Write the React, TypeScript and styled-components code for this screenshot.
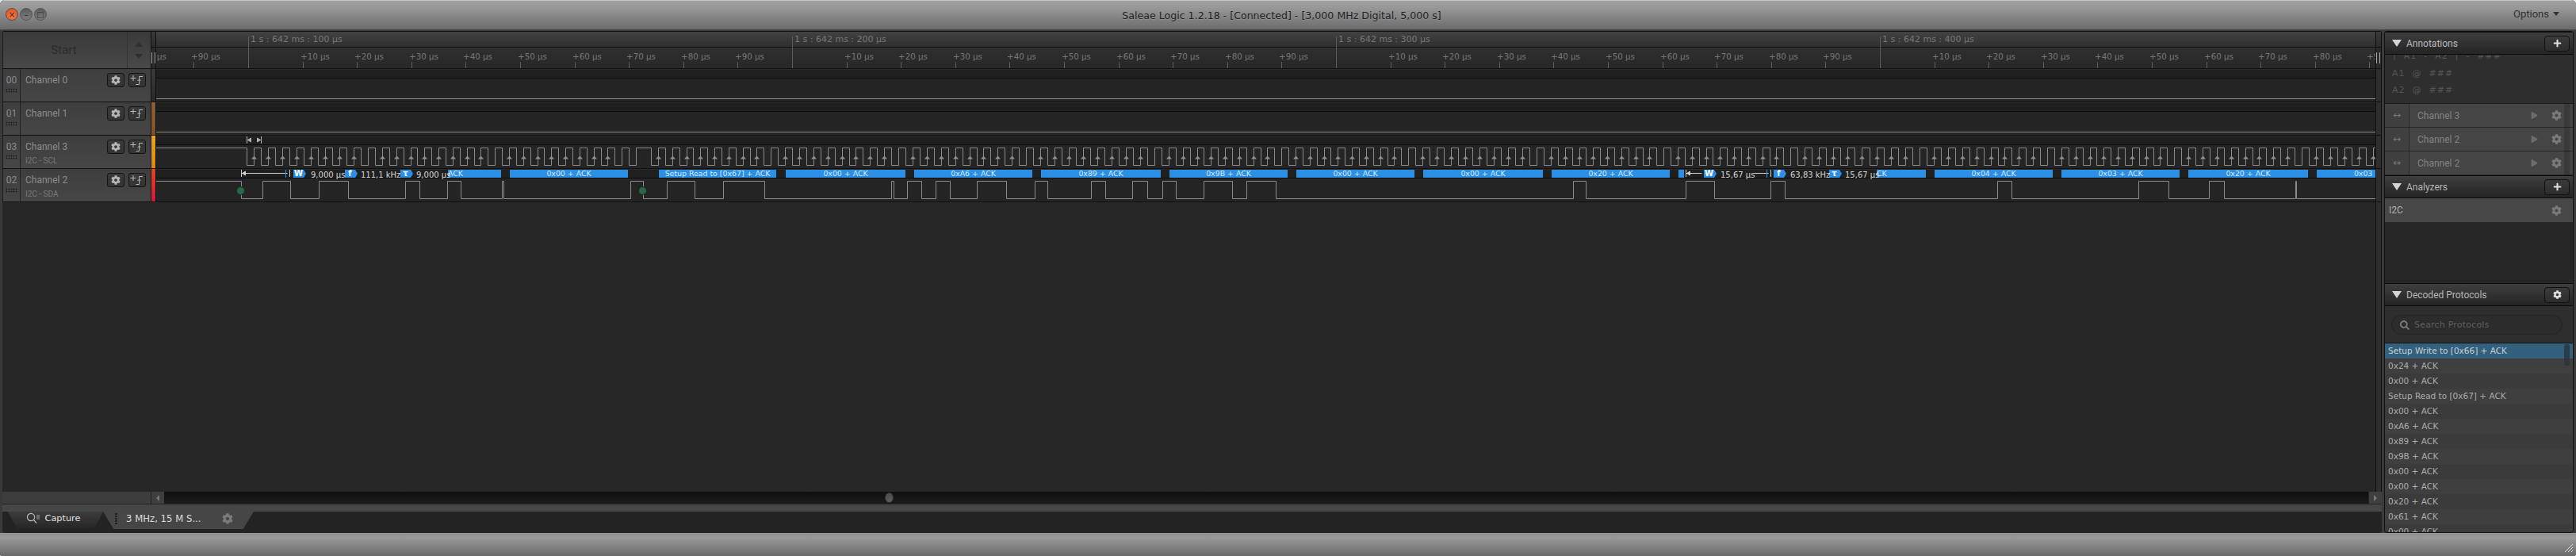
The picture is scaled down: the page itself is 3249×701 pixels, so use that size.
import styled, { createGlobalStyle } from "styled-components";
import { FaCog, FaPlus, FaPlay, FaSearch } from "react-icons/fa";

const GlobalStyle = createGlobalStyle`
    html, body {
        margin: 0;
        padding: 0;
        background: #e8e8e8;
        overflow: hidden;
    }
    * { box-sizing: border-box; }
`;

const SANS = `"DejaVu Sans", sans-serif`;
const ROBOTO = `Roboto, "Liberation Sans", sans-serif`;

const Window = styled.div`
    width: 3249px;
    height: 701px;
    display: flex;
    flex-direction: column;
    border-radius: 6px 6px 3px 3px;
    overflow: hidden;
    background: #3c3c3c;
    font-family: ${SANS};
`;

const TitleBar = styled.header`
    height: 38px;
    flex: none;
    position: relative;
    display: flex;
    align-items: center;
    justify-content: center;
    background: linear-gradient(#a2a2a2, #9a9a9a 20%, #6c6c6c);
    border-top: 1px solid #c8c8c8;
    border-bottom: 1px solid #4a4a4a;
`;

const Lights = styled.div`
    position: absolute;
    left: 7px;
    top: 9px;
    display: flex;
    gap: 2px;
`;

const Light = styled.span<{ $red?: boolean }>`
    width: 16px;
    height: 16px;
    border-radius: 50%;
    display: flex;
    align-items: center;
    justify-content: center;
    font: 10px ${SANS};
    color: #2f2f2f;
    border: 1px solid #555;
    background: ${(p) =>
        p.$red ? "radial-gradient(circle at 50% 70%, #f77a3c, #dc4c22)" : "linear-gradient(#5c5c5c, #7d7d7d)"};
`;

const Title = styled.div`
    font-size: 12.6px;
    color: #1f1f1f;
    text-shadow: 0 1px 0 rgba(255, 255, 255, 0.15);
    margin-left: -16px;
`;

const Options = styled.div`
    position: absolute;
    right: 21px;
    top: 9px;
    display: flex;
    align-items: center;
    gap: 5px;
    font: 13px ${ROBOTO};
    color: #303030;
`;

const DownCaret = styled.span`
    width: 0;
    height: 0;
    border-left: 4px solid transparent;
    border-right: 4px solid transparent;
    border-top: 5px solid #333;
`;

const Body = styled.div`
    flex: 1;
    min-height: 0;
    display: flex;
    gap: 3px;
    padding: 1px 3px 0 3px;
    background: #3a3a3a;
`;

const MainColumn = styled.main`
    width: 3001px;
    flex: none;
    display: flex;
    flex-direction: column;
    background: #272727;
    border-radius: 3px 3px 4px 4px;
    overflow: hidden;
`;

const HeaderRow = styled.div`
    height: 48px;
    flex: none;
    display: flex;
    border-top: 1px solid #111;
    border-bottom: 1px solid #111;
`;

const StartBlock = styled.div`
    width: 187px;
    flex: none;
    display: flex;
    background: linear-gradient(#3a3a3a, #484848);
    border-left: 1px solid #1c1c1c;
`;

const StartLabel = styled.div`
    flex: 1;
    display: flex;
    align-items: center;
    justify-content: center;
    font: 15px ${ROBOTO};
    color: #2c2c2c;
    padding-right: 3px;
`;

const StepCell = styled.div`
    width: 30px;
    display: flex;
    flex-direction: column;
    align-items: center;
    justify-content: center;
    gap: 9px;
    border-left: 1px solid #333;
    padding-right: 2px;
`;

const StepArrow = styled.span<{ $down?: boolean }>`
    width: 0;
    height: 0;
    border-left: 5px solid transparent;
    border-right: 5px solid transparent;
    ${(p) => (p.$down ? "border-top: 6px solid #2f2f2f;" : "border-bottom: 6px solid #2f2f2f;")}
`;

const HandleCell = styled.div`
    width: 7px;
    flex: none;
    display: flex;
    flex-direction: column;
    background: #2b2b2b;
    border-left: 1px solid #0e0e0e;
    border-right: 1px solid #0e0e0e;
`;

const HandleEnd = styled(HandleCell)`
    width: 8px;
`;

const HandleTop = styled.div`
    height: 20px;
    background: linear-gradient(#3a3a3a, #2b2b2b);
    border-bottom: 1px solid #0e0e0e;
`;

const Grip = styled.div`
    width: 5px;
    height: 14px;
    margin-top: 6px;
    border-left: 1px solid #aaa;
    border-right: 1px solid #aaa;
`;

const Ruler = styled.div`
    flex: 1;
    min-width: 0;
    position: relative;
    display: flex;
    flex-direction: column;
    overflow: hidden;
`;

const RulerTop = styled.div`
    height: 20px;
    flex: none;
    background: linear-gradient(#424242, #2f2f2f);
    border-bottom: 1px solid #0e0e0e;
`;

const RulerBottom = styled.div`
    flex: 1;
    background: linear-gradient(#2f2f2f, #272727);
`;

const RulerText = styled.span<{ $major?: boolean }>`
    position: absolute;
    top: ${(p) => (p.$major ? "3px" : "24px")};
    font-size: ${(p) => (p.$major ? "11px" : "10.3px")};
    line-height: 14px;
    white-space: nowrap;
    color: #777;
`;

const RulerTick = styled.span<{ $major?: boolean }>`
    position: absolute;
    bottom: 0;
    width: 1px;
    height: ${(p) => (p.$major ? "40px" : "8px")};
    background: #5c5c5c;
`;

const EndStrip = styled.div`
    width: 8px;
    flex: none;
    background: #2e2e2e;
    border-left: 1px solid #0e0e0e;
    border-right: 1px solid #0e0e0e;
`;

const ChannelRow = styled.div`
    height: 42px;
    flex: none;
    display: flex;
    border-bottom: 1px solid #111;
`;

const ChannelLabel = styled.div`
    width: 187px;
    flex: none;
    display: flex;
    background: linear-gradient(#3e3e3e, #464646);
    border-left: 1px solid #1c1c1c;
`;

const NumberCell = styled.div`
    width: 22px;
    flex: none;
    display: flex;
    flex-direction: column;
    align-items: center;
    padding-top: 7px;
    gap: 3px;
    border-right: 1px solid #222;
    font: 12px/14px ${ROBOTO};
    color: #8a8a8a;
`;

const DotGrid = styled.span`
    width: 15px;
    height: 6px;
    background: radial-gradient(circle, #151515 40%, transparent 50%) 0 0 / 3px 3px;
`;

const NameCell = styled.div`
    flex: 1;
    padding: 7px 0 0 6px;
    display: flex;
    flex-direction: column;
    gap: 5px;
`;

const ChannelName = styled.div`
    font: 12px/14px ${ROBOTO};
    color: #8c8c8c;
`;

const ChannelSub = styled.div`
    font: 10px/12px ${ROBOTO};
    color: #777;
`;

const RowButtons = styled.div`
    display: flex;
    gap: 5px;
    padding: 5px 6px 0 0;
`;

const RowButton = styled.button`
    width: 22px;
    height: 18px;
    padding: 0;
    display: flex;
    align-items: center;
    justify-content: center;
    border: 1px solid #151515;
    border-radius: 3px;
    background: linear-gradient(#3a3a3a, #333);
    color: #b4b4b4;
    font-size: 12px;
`;

const ColorStrip = styled.div<{ $top: string; $bottom: string }>`
    width: 7px;
    flex: none;
    background: linear-gradient(${(p) => p.$top}, ${(p) => p.$bottom});
    border-left: 1px solid #0e0e0e;
    border-right: 1px solid #0e0e0e;
`;

const Trace = styled.div`
    flex: 1;
    min-width: 0;
    position: relative;
    display: flex;
    flex-direction: column;
    overflow: hidden;
    background: #242424;
`;

const Lane = styled.div`
    height: 12px;
    flex: none;
    position: relative;
    background: #1f1f1f;
    border-top: 1px solid #2a2a2a;
    border-bottom: 1px solid #0c0c0c;
`;

const Wave = styled.svg`
    display: block;
    flex: 1;
    width: 100%;
    min-height: 0;
`;

const DecodedBar = styled.div<{ $left?: boolean }>`
    position: absolute;
    top: 0;
    height: 10px;
    background: #2b8fe5;
    overflow: hidden;
    white-space: nowrap;
    font-size: 9.4px;
    line-height: 9px;
    color: #d8e9f8;
    text-align: ${(p) => (p.$left ? "left" : "center")};
`;

const MeasureBadge = styled.span`
    position: absolute;
    top: 0;
    width: 16px;
    height: 10px;
    background: #2b8fe5;
    clip-path: polygon(0 0, 13px 0, 16px 5px, 13px 10px, 0 10px);
    font-size: 10px;
    font-weight: bold;
    line-height: 10px;
    color: #fff;
    text-align: center;
    padding-right: 3px;
`;

const MeasureText = styled.span`
    position: absolute;
    top: 0;
    font-size: 10px;
    line-height: 13px;
    white-space: nowrap;
    color: #d6d6d6;
`;

const MeasureLines = styled.svg`
    position: absolute;
    top: 0;
    left: 0;
    width: 2799px;
    height: 10px;
    overflow: visible;
`;

const StartDot = styled.span`
    position: absolute;
    top: 22px;
    width: 11px;
    height: 11px;
    border-radius: 50%;
    background: #2c6644;
    border: 1px solid #1b2d22;
`;

const Filler = styled.div`
    flex: 1;
    display: flex;
    justify-content: flex-end;
    background: #272727;
`;

const ScrollRow = styled.div`
    height: 16px;
    flex: none;
    display: flex;
    border-bottom: 1px solid #222;
`;

const ScrollBlank = styled.div`
    width: 187px;
    background: #3d3d3d;
`;

const ScrollArrow = styled.div<{ $right?: boolean }>`
    width: 17px;
    flex: none;
    display: flex;
    align-items: center;
    justify-content: center;
    background: #3f3f3f;
    border-left: 1px solid #222;
    &::before {
        content: "";
        width: 0;
        height: 0;
        border-top: 4px solid transparent;
        border-bottom: 4px solid transparent;
        ${(p) => (p.$right ? "border-left: 4px solid #777;" : "border-right: 4px solid #777;")}
    }
`;

const ScrollTrack = styled.div`
    flex: 1;
    display: flex;
    align-items: center;
    padding-left: 909px;
    background: linear-gradient(#0f0f0f, #1c1c1c);
`;

const ScrollThumb = styled.span`
    width: 11px;
    height: 13px;
    border-radius: 50%;
    background: linear-gradient(#4c4c4c, #5c5c5c);
    border: 1px solid #333;
`;

const TabBand = styled.div`
    height: 9px;
    flex: none;
    background: #464646;
`;

const TabRow = styled.div`
    height: 27px;
    flex: none;
    display: flex;
    align-items: flex-start;
    background: #232323;
    padding-left: 7px;
`;

const CaptureTab = styled.div`
    width: 120px;
    height: 21px;
    display: flex;
    align-items: center;
    justify-content: center;
    gap: 6px;
    padding: 0 6px 4px 0;
    font-size: 11.3px;
    color: #e0e0e0;
    background: linear-gradient(#3c3c3c, #262626);
    clip-path: polygon(0 0, 100% 0, 91% 100%, 9% 100%);
`;

const SessionTab = styled.div`
    width: 190px;
    height: 22px;
    display: flex;
    align-items: center;
    padding: 0 0 4px 15px;
    font-size: 11.7px;
    color: #dcdcdc;
    background: #464646;
    clip-path: polygon(0 0, 100% 0, 93% 100%, 7% 100%);
`;

const SessionGrip = styled.span`
    width: 3px;
    height: 14px;
    margin-right: 11px;
    background: repeating-linear-gradient(#222 0 2px, transparent 2px 3px);
`;

const SessionGear = styled.span`
    margin-left: 26px;
    display: flex;
    color: #7c7c7c;
    font-size: 14px;
`;

const SidePanel = styled.aside`
    width: 239px;
    flex: none;
    position: relative;
    display: flex;
    flex-direction: column;
    background: #262626;
    border: 1px solid #111;
    border-radius: 3px 3px 4px 4px;
    overflow: hidden;
`;

const PanelHeader = styled.div`
    height: 29px;
    flex: none;
    display: flex;
    align-items: center;
    padding: 0 4px 0 9px;
    background: linear-gradient(#3e3e3e, #242424);
    border-bottom: 1px solid #0c0c0c;
    border-top: 1px solid #0c0c0c;
`;

const PanelCaret = styled.span`
    width: 0;
    height: 0;
    margin-right: 6px;
    border-left: 6px solid transparent;
    border-right: 6px solid transparent;
    border-top: 9px solid #d4d4d4;
`;

const PanelTitle = styled.div`
    flex: 1;
    font: 12px ${ROBOTO};
    color: #b8b8b8;
`;

const PanelButton = styled.button`
    width: 32px;
    height: 20px;
    padding: 0;
    display: flex;
    align-items: center;
    justify-content: center;
    border: 1px solid #111;
    border-radius: 4px;
    background: linear-gradient(#3a3a3a, #2d2d2d);
    color: #e0e0e0;
    font-size: 11px;
`;

const AnnotationArea = styled.div`
    height: 62px;
    flex: none;
    position: relative;
    overflow: hidden;
    background: #2e2e2e;
    border-bottom: 1px solid #1c1c1c;
    font: 11px/21px ${SANS};
    color: #555;
`;

const AnnotationClip = styled.div`
    margin-top: -9px;
    padding-left: 10px;
    height: 22px;
    line-height: 22px;
    letter-spacing: 1px;
    white-space: pre;
`;

const AnnotationRow = styled.div`
    padding-left: 9px;
    letter-spacing: 1px;
    white-space: pre;
`;

const MarkerRow = styled.div`
    height: 30px;
    flex: none;
    display: flex;
    align-items: center;
    background: #454545;
    border-bottom: 1px solid #282828;
    font: 12px ${ROBOTO};
    color: #838383;
`;

const MoveCell = styled.div`
    width: 31px;
    height: 100%;
    flex: none;
    display: flex;
    align-items: center;
    justify-content: center;
    font: 12px ${SANS};
    color: #777;
    background: #404040;
    border-right: 1px solid #2a2a2a;
    padding-bottom: 2px;
`;

const MarkerName = styled.div`
    flex: 1;
    padding-left: 10px;
`;

const MarkerPlay = styled.span`
    display: flex;
    color: #6c6c6c;
    font-size: 9px;
    margin-right: 17px;
`;

const MarkerGear = styled.span`
    display: flex;
    color: #7a7a7a;
    font-size: 13px;
    margin-right: 14px;
`;

const AnalyzerRow = styled.div`
    height: 30px;
    flex: none;
    display: flex;
    align-items: center;
    background: #474747;
    padding-left: 5px;
    font: 12px ${ROBOTO};
    color: #b0b0b0;
`;

const AnalyzerName = styled.div`
    flex: 1;
`;

const PanelSpacer = styled.div`
    height: 77px;
    flex: none;
`;

const SearchArea = styled.div`
    height: 47px;
    flex: none;
    padding: 11px 13px 0 8px;
    background: #2e2e2e;
    border-bottom: 1px solid #111;
`;

const SearchPill = styled.div`
    height: 25px;
    display: flex;
    align-items: center;
    gap: 6px;
    padding-left: 10px;
    border-radius: 13px;
    border: 1px solid #232323;
    background: #2c2c2c;
    color: #5e5e5e;
    font-size: 11px;
    letter-spacing: 0.2px;
`;

const SearchIcon = styled.span`
    display: flex;
    color: #7a7a7a;
    font-size: 12px;
`;

const ProtocolList = styled.div`
    flex: 1;
    min-height: 0;
    position: relative;
    overflow: hidden;
`;

const ProtocolRow = styled.div<{ $selected?: boolean; $alt?: boolean }>`
    height: 19px;
    padding-left: 4px;
    font-size: 10.5px;
    line-height: 18px;
    white-space: nowrap;
    color: ${(p) => (p.$selected ? "#c4d0d8" : "#acacac")};
    background: ${(p) => (p.$selected ? "#33607c" : p.$alt ? "#3f3f3f" : "#3b3b3b")};
`;

const ListThumb = styled.span`
    position: absolute;
    top: 1px;
    right: 4px;
    width: 7px;
    height: 27px;
    border-radius: 3px;
    background: rgba(40, 50, 58, 0.75);
`;

const AnnotationThumb = styled.span`
    position: absolute;
    top: 60px;
    right: 4px;
    width: 7px;
    height: 121px;
    border-radius: 3px;
    background: rgba(30, 30, 30, 0.3);
`;

const StatusBar = styled.footer`
    height: 29px;
    flex: none;
    position: relative;
    border-top: 1px solid #999;
    background: linear-gradient(#8e8e8e, #9a9a9a 15%, #6a6a6a);
`;

const ResizeGrip = styled.svg`
    position: absolute;
    right: 3px;
    bottom: 4px;
`;

const TRACE_X = 197;
const TICK_PERIOD = 68.6;
const MAJORS = [313, 999, 1685, 2371];
const TRACE_WIDTH = 2799;

const channels = [
    { num: "00", name: "Channel 0", sub: "", top: "#3a3a3a", bottom: "#2a2a2a" },
    { num: "01", name: "Channel 1", sub: "", top: "#8e6038", bottom: "#84501e" },
    { num: "03", name: "Channel 3", sub: "I2C - SCL", top: "#eca422", bottom: "#d98a0a" },
    { num: "02", name: "Channel 2", sub: "I2C - SDA", top: "#e2471f", bottom: "#d0183c" },
];

const sdaEdges = [
    304, 331, 366, 402, 439, 511, 529, 564, 581, 633, 635, 795, 811, 841, 876, 912, 964, 1124, 1127, 1144, 1162, 1180,
    1198, 1232, 1269, 1305, 1321, 1376, 1394, 1428, 1447, 1466, 1483, 1518, 1554, 1572, 1609, 1984, 2000, 2126, 2162,
    2233, 2251, 2519, 2537, 2697, 2735, 2786, 2805, 2895, 2896,
];

const byteStarts = [320, 482, 642, 830, 990, 1151, 1312, 1474, 1634, 1794, 1956, 2116, 2276, 2439, 2600, 2760, 2921, 3082];

const decodedBars = [
    { x: 565, w: 67, text: "ACK", left: true },
    { x: 643, w: 149, text: "0x00 + ACK" },
    { x: 831, w: 148, text: "Setup Read to [0x67] + ACK" },
    { x: 991, w: 151, text: "0x00 + ACK" },
    { x: 1153, w: 149, text: "0xA6 + ACK" },
    { x: 1313, w: 151, text: "0x89 + ACK" },
    { x: 1475, w: 149, text: "0x9B + ACK" },
    { x: 1635, w: 149, text: "0x00 + ACK" },
    { x: 1795, w: 151, text: "0x00 + ACK" },
    { x: 1957, w: 149, text: "0x20 + ACK" },
    { x: 2117, w: 7, text: "" },
    { x: 2367, w: 62, text: "CK", left: true },
    { x: 2440, w: 149, text: "0x04 + ACK" },
    { x: 2600, w: 149, text: "0x03 + ACK" },
    { x: 2760, w: 151, text: "0x20 + ACK" },
    { x: 2922, w: 150, text: "0x03 + ACK" },
];

const badges = [
    { x: 370, glyph: "W" },
    { x: 435, glyph: "f" },
    { x: 505, glyph: "τ" },
    { x: 2149, glyph: "W" },
    { x: 2237, glyph: "f" },
    { x: 2307, glyph: "τ" },
];

const readings = [
    { x: 392, text: "9,000 µs" },
    { x: 455, text: "111,1 kHz" },
    { x: 525, text: "9,000 µs" },
    { x: 2170, text: "15,67 µs" },
    { x: 2258, text: "63,83 kHz" },
    { x: 2327, text: "15,67 µs" },
];

const protocols = [
    "Setup Write to [0x66] + ACK",
    "0x24 + ACK",
    "0x00 + ACK",
    "Setup Read to [0x67] + ACK",
    "0x00 + ACK",
    "0xA6 + ACK",
    "0x89 + ACK",
    "0x9B + ACK",
    "0x00 + ACK",
    "0x00 + ACK",
    "0x20 + ACK",
    "0x61 + ACK",
    "0x00 + ACK",
];

// turn a list of edge positions into a stepped line, starting high
function wavePath(edges: number[]) {
    const HIGH = 3.5;
    const LOW = 25.5;
    let level = HIGH;
    let d = `M0 ${HIGH}`;
    edges.forEach((edge) => {
        const x = Math.round(edge - TRACE_X) + 0.5;
        d += ` H${x}`;
        level = level === HIGH ? LOW : HIGH;
        d += ` V${level}`;
    });
    return d + ` H${TRACE_WIDTH}`;
}

function clockEdges() {
    const edges: number[] = [311];
    const arrows: number[] = [];
    byteStarts.slice(0, -1).forEach((start, b) => {
        let next = byteStarts[b + 1];
        // stop condition sits between the write and the read transfer
        if (start === 642) next = 802;
        const period = (next - start) / 9;
        for (let i = 0; i < 9; i++) {
            const rise = start + i * period;
            edges.push(rise, rise + period / 2);
            if (i < 8) arrows.push(rise);
        }
        if (start === 642) edges.push(802, 821);
    });
    return { edges: edges.filter((x) => x < 3000), arrows };
}

function TriggerIcon() {
    return (
        <svg width="18" height="14" viewBox="0 0 18 14" fill="none" stroke="#b8b8b8" strokeWidth="1">
            <path d="M0.5 4.5H7.5M4 1V8" />
            <path d="M7.5 12.5H11.5V2.5H16" />
            <path d="M9.5 8L11.5 6L13.5 8" />
        </svg>
    );
}

function CaptureIcon() {
    return (
        <svg width="18" height="15" viewBox="0 0 18 15" fill="none" stroke="#bdbdbd" strokeWidth="1.2">
            <circle cx="6" cy="6" r="4.6" />
            <path d="M9.5 9.5L13 13.5" />
            <path d="M13 4H17M13 6H17M13 8H17" strokeWidth="0.8" />
        </svg>
    );
}

function RulerMarks() {
    const items: React.ReactNode[] = [];
    MAJORS.forEach((major, m) => {
        const x = major - TRACE_X;
        items.push(<RulerTick key={`M${m}`} $major style={{ left: x }} />);
        items.push(
            <RulerText key={`L${m}`} $major style={{ left: x + 3 }}>
                1 s : 642 ms : {(m + 1) * 100} µs
            </RulerText>
        );
        // only the first block needs ticks to its left, the rest are covered by the previous block
        const from = m === 0 ? -2 : 1;
        for (let i = from; i < 10; i++) {
            if (i === 0) continue;
            const step = i < 0 ? 10 + i : i;
            const tick = x + i * TICK_PERIOD;
            items.push(<RulerTick key={`t${m}${i}`} style={{ left: Math.round(tick) }} />);
            items.push(
                <RulerText key={`x${m}${i}`} style={{ left: Math.round(tick) - 3 }}>
                    +{step * 10} µs
                </RulerText>
            );
        }
    });
    return <>{items}</>;
}

function MeasureOverlay() {
    const x = (v: number) => v - TRACE_X + 0.5;
    return (
        <MeasureLines viewBox={`0 0 ${TRACE_WIDTH} 10`} fill="none" stroke="#cfcfcf">
            <path d={`M${x(304)} 0V9M${x(304)} 4.5H${x(362)}M${x(365)} 0V9`} />
            <path d={`M${x(360)} 0V10`} stroke="#2b8fe5" />
            <path d={`M${x(305)} 4.5L${x(309)} 2V7Z`} fill="#cfcfcf" />
            <path d={`M${x(2126)} 0V9M${x(2126)} 4.5H${x(2146)}M${x(2212)} 4.5H${x(2230)}M${x(2233)} 0V9`} />
            <path d={`M${x(2228)} 0V10`} stroke="#2b8fe5" />
            <path d={`M${x(2127)} 4.5L${x(2131)} 2V7Z`} fill="#cfcfcf" />
        </MeasureLines>
    );
}

function ClockMarkers() {
    const x = (v: number) => v - TRACE_X + 0.5;
    return (
        <MeasureLines viewBox={`0 0 ${TRACE_WIDTH} 10`} fill="none" stroke="#b0b0b0">
            <path d={`M${x(311)} 0V9M${x(311)} 4.5H${x(313)}M${x(329)} 0V9M${x(327)} 4.5H${x(329)}`} />
            <path d={`M${x(312)} 4.5L${x(316)} 2V7Z`} fill="#b0b0b0" />
            <path d={`M${x(328)} 4.5L${x(324)} 2V7Z`} fill="#b0b0b0" />
        </MeasureLines>
    );
}

function App() {
    const clock = clockEdges();

    return (
        <Window>
            <GlobalStyle />
            <TitleBar>
                <Lights>
                    <Light $red>×</Light>
                    <Light>–</Light>
                    <Light>□</Light>
                </Lights>
                <Title>Saleae Logic 1.2.18 - [Connected] - [3,000 MHz Digital, 5,000 s]</Title>
                <Options>
                    Options
                    <DownCaret />
                </Options>
            </TitleBar>
            <Body>
                <MainColumn>
                    <HeaderRow>
                        <StartBlock>
                            <StartLabel>Start</StartLabel>
                            <StepCell>
                                <StepArrow />
                                <StepArrow $down />
                            </StepCell>
                        </StartBlock>
                        <HandleCell>
                            <HandleTop />
                            <Grip />
                        </HandleCell>
                        <Ruler>
                            <RulerTop />
                            <RulerBottom />
                            <RulerMarks />
                        </Ruler>
                        <HandleEnd>
                            <HandleTop />
                            <Grip />
                        </HandleEnd>
                    </HeaderRow>
                    {channels.map((ch) => (
                        <ChannelRow key={ch.num}>
                            <ChannelLabel>
                                <NumberCell>
                                    {ch.num}
                                    <DotGrid />
                                </NumberCell>
                                <NameCell>
                                    <ChannelName>{ch.name}</ChannelName>
                                    {ch.sub && <ChannelSub>{ch.sub}</ChannelSub>}
                                </NameCell>
                                <RowButtons>
                                    <RowButton>
                                        <FaCog />
                                    </RowButton>
                                    <RowButton>
                                        <TriggerIcon />
                                    </RowButton>
                                </RowButtons>
                            </ChannelLabel>
                            <ColorStrip $top={ch.top} $bottom={ch.bottom} />
                            <Trace>
                                <Lane>
                                    {ch.num === "03" && <ClockMarkers />}
                                    {ch.num === "02" &&
                                        decodedBars.map((bar) => (
                                            <DecodedBar
                                                key={bar.x}
                                                $left={bar.left}
                                                style={{ left: bar.x - TRACE_X, width: bar.w }}
                                            >
                                                {bar.text}
                                            </DecodedBar>
                                        ))}
                                    {ch.num === "02" && <MeasureOverlay />}
                                    {ch.num === "02" &&
                                        badges.map((b) => (
                                            <MeasureBadge key={b.x} style={{ left: b.x - TRACE_X }}>
                                                {b.glyph}
                                            </MeasureBadge>
                                        ))}
                                    {ch.num === "02" &&
                                        readings.map((r) => (
                                            <MeasureText key={r.x} style={{ left: r.x - TRACE_X }}>
                                                {r.text}
                                            </MeasureText>
                                        ))}
                                </Lane>
                                <Wave viewBox={`0 0 ${TRACE_WIDTH} 29`} preserveAspectRatio="none" fill="none">
                                    {(ch.num === "00" || ch.num === "01") && (
                                        <path d={`M0 25.5H${TRACE_WIDTH}`} stroke="#8c8c8c" />
                                    )}
                                    {ch.num === "03" && <path d={wavePath(clock.edges)} stroke="#8a8a8a" />}
                                    {ch.num === "03" &&
                                        clock.arrows.map((a) => {
                                            const x = Math.round(a - TRACE_X) + 0.5;
                                            return <path key={a} d={`M${x} 13.5l3.5 4h-7z`} fill="#8f8f8f" />;
                                        })}
                                    {ch.num === "02" && <path d={wavePath(sdaEdges)} stroke="#8a8a8a" />}
                                </Wave>
                                {ch.num === "02" && <StartDot style={{ left: 304 - TRACE_X - 6 }} />}
                                {ch.num === "02" && <StartDot style={{ left: 811 - TRACE_X - 6 }} />}
                            </Trace>
                            <EndStrip />
                        </ChannelRow>
                    ))}
                    <Filler>
                        <EndStrip />
                    </Filler>
                    <ScrollRow>
                        <ScrollBlank />
                        <ScrollArrow />
                        <ScrollTrack>
                            <ScrollThumb />
                        </ScrollTrack>
                        <ScrollArrow $right />
                    </ScrollRow>
                    <TabBand />
                    <TabRow>
                        <CaptureTab>
                            <CaptureIcon />
                            Capture
                        </CaptureTab>
                        <SessionTab>
                            <SessionGrip />
                            3 MHz, 15 M S...
                            <SessionGear>
                                <FaCog />
                            </SessionGear>
                        </SessionTab>
                    </TabRow>
                </MainColumn>
                <SidePanel>
                    <AnnotationThumb />
                    <PanelHeader>
                        <PanelCaret />
                        <PanelTitle>Annotations</PanelTitle>
                        <PanelButton>
                            <FaPlus />
                        </PanelButton>
                    </PanelHeader>
                    <AnnotationArea>
                        <AnnotationClip>{"|  A1  -  A2  |  -  ###"}</AnnotationClip>
                        <AnnotationRow>{"A1  @  ###"}</AnnotationRow>
                        <AnnotationRow>{"A2  @  ###"}</AnnotationRow>
                    </AnnotationArea>
                    {["Channel 3", "Channel 2", "Channel 2"].map((name, i) => (
                        <MarkerRow key={i}>
                            <MoveCell>↔</MoveCell>
                            <MarkerName>{name}</MarkerName>
                            <MarkerPlay>
                                <FaPlay />
                            </MarkerPlay>
                            <MarkerGear>
                                <FaCog />
                            </MarkerGear>
                        </MarkerRow>
                    ))}
                    <PanelHeader>
                        <PanelCaret />
                        <PanelTitle>Analyzers</PanelTitle>
                        <PanelButton>
                            <FaPlus />
                        </PanelButton>
                    </PanelHeader>
                    <AnalyzerRow>
                        <AnalyzerName>I2C</AnalyzerName>
                        <MarkerGear>
                            <FaCog />
                        </MarkerGear>
                    </AnalyzerRow>
                    <PanelSpacer />
                    <PanelHeader>
                        <PanelCaret />
                        <PanelTitle>Decoded Protocols</PanelTitle>
                        <PanelButton>
                            <FaCog />
                        </PanelButton>
                    </PanelHeader>
                    <SearchArea>
                        <SearchPill>
                            <SearchIcon>
                                <FaSearch />
                            </SearchIcon>
                            Search Protocols
                        </SearchPill>
                    </SearchArea>
                    <ProtocolList>
                        {protocols.map((text, i) => (
                            <ProtocolRow key={i} $selected={i === 0} $alt={i % 2 === 1}>
                                {text}
                            </ProtocolRow>
                        ))}
                        <ListThumb />
                    </ProtocolList>
                </SidePanel>
            </Body>
            <StatusBar>
                <ResizeGrip width="12" height="12" viewBox="0 0 12 12" stroke="#ddd" strokeWidth="1">
                    <path d="M1 11L11 1M5 11L11 5M9 11L11 9" />
                </ResizeGrip>
            </StatusBar>
        </Window>
    );
}

export default App;
